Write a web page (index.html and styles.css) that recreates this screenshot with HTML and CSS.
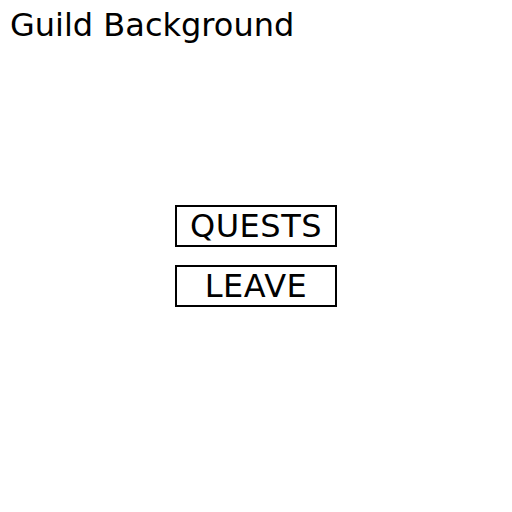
FILE: index.html
```html
<!DOCTYPE html>
<html>
<head>
<meta charset="utf-8">
<link rel="stylesheet" href="styles.css">
</head>
<body>
<div class="screen">
  <h1 class="title">Guild Background</h1>
  <nav class="menu">
    <button class="menu-btn">QUESTS</button>
    <button class="menu-btn">LEAVE</button>
  </nav>
</div>
</body>
</html>
```
FILE: styles.css
```css
html, body {
  margin: 0;
  padding: 0;
  background: #fff;
}
.screen {
  width: 512px;
  height: 512px;
  display: grid;
  grid-template: 1fr / 1fr;
  font-family: "DejaVu Sans", sans-serif;
  color: #000;
}
.title {
  grid-area: 1 / 1;
  align-self: start;
  justify-self: start;
  margin: 0;
  padding: 7px 0 0 10px;
  font-size: 32px;
  font-weight: normal;
  line-height: 37px;
}
.menu {
  grid-area: 1 / 1;
  align-self: center;
  justify-self: center;
  display: flex;
  flex-direction: column;
  gap: 18px;
}
.menu-btn {
  box-sizing: border-box;
  width: 162px;
  height: 42px;
  border: 2px solid #000;
  background: #fff;
  padding: 1px 0 0 0;
  font-family: "DejaVu Sans", sans-serif;
  font-size: 32px;
  letter-spacing: 0.5px;
  color: #000;
  line-height: 37px;
}
```
